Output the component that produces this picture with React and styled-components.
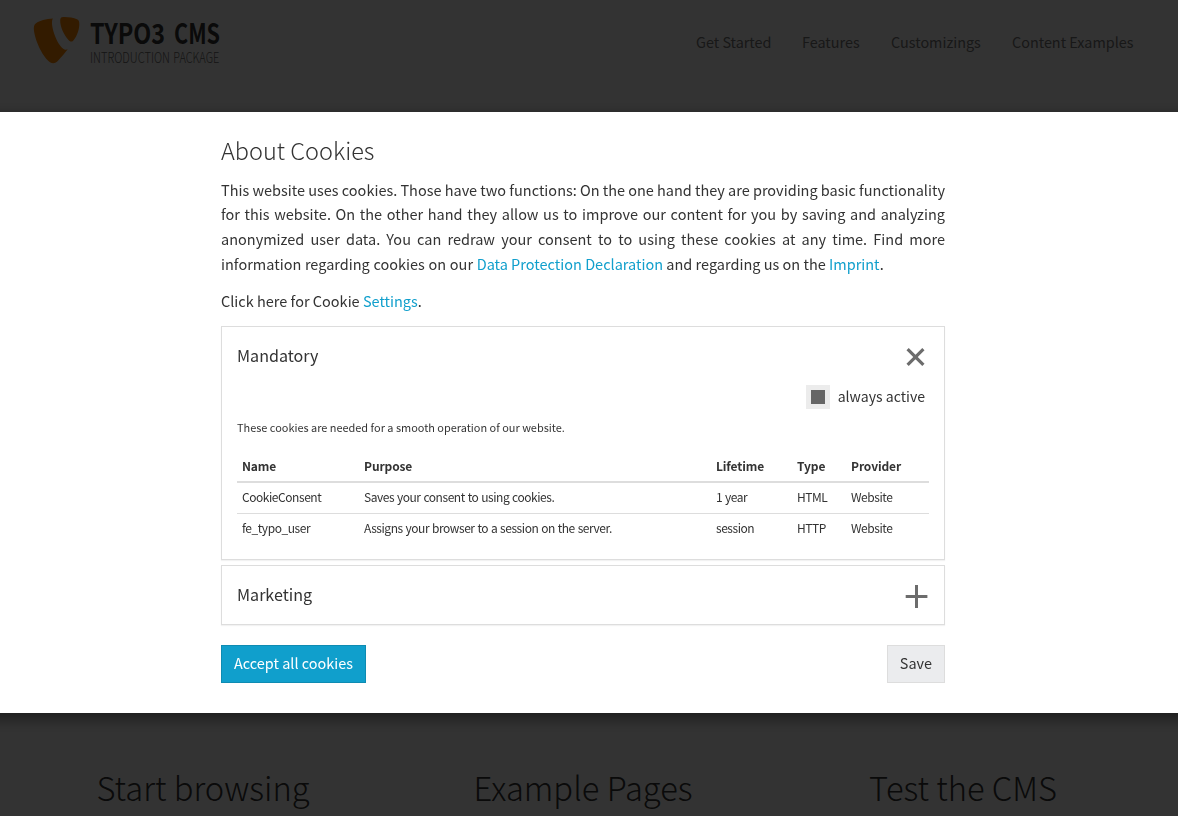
import React, { useState } from "react";
import styled, { createGlobalStyle } from "styled-components";

const GlobalStyle = createGlobalStyle`
  *, *::before, *::after { box-sizing: border-box; }
  html, body { margin: 0; height: 816px; overflow: hidden; }
  body {
    background: #fff;
    color: #333;
    font-family: "Noto Sans CJK SC", "Open Sans", sans-serif;
    font-size: 14.5px;
    line-height: 24.75px;
    font-kerning: normal;
  }
  h1, h2, h3, p { margin: 0; font-weight: 400; }
`;

const Page = styled.div`
  width: 1166px;
  height: 816px;
  display: flex;
  flex-direction: column;
  justify-content: space-between;
`;

const Header = styled.header`
  display: flex;
  justify-content: space-between;
  padding: 12px 33px 0 29px;
`;

const LogoImage = styled.svg`
  width: 194px;
  height: 56px;
  overflow: visible;
`;

const Nav = styled.nav`
  display: flex;
  gap: 30px;
  padding-top: 18px;
`;

const NavLink = styled.a`
  width: ${(p) => p.$width}px;
  color: #777;
  font-size: 14.4px;
  white-space: nowrap;
`;

const Teasers = styled.section`
  display: grid;
  grid-template-columns: repeat(3, 1fr);
  width: 1140px;
  height: 53px;
  margin: 0 auto;
`;

const TeaserTitle = styled.h2`
  font-size: 32.7px;
  font-weight: 300;
  line-height: 48px;
  text-align: center;
`;

const Overlay = styled.div`
  position: fixed;
  inset: 0;
  padding-top: 112px;
  background: rgba(0, 0, 0, 0.8);
`;

const Dialog = styled.div`
  height: 601px;
  margin: 0 -30px;
  padding: 19.75px 30px 0;
  background: #fff;
  box-shadow: 0 5px 15px rgba(0, 0, 0, 0.5);
`;

const DialogContent = styled.div`
  width: 724px;
  margin-left: 221px;
`;

const Title = styled.h1`
  margin-bottom: 9.95px;
  font-size: 23.5px;
  font-weight: 300;
  line-height: 36px;
`;

const Paragraph = styled.p`
  margin-bottom: 12.15px;
`;

const JustifiedLine = styled.span`
  display: block;
  text-align: justify;
  text-align-last: justify;
  word-spacing: -1.5px;
  white-space: normal;
`;

const LeadPhrase = styled.span`
  word-spacing: 0.4px;
`;

const Link = styled.a`
  color: #109fcc;
`;

const Card = styled.section`
  margin-bottom: 5px;
  padding: 0 15px;
  border: 1px solid #ddd;
  box-shadow: 0 1px 1px rgba(0, 0, 0, 0.05);
`;

const CardHeader = styled.div`
  display: flex;
  align-items: center;
  justify-content: space-between;
  height: 58px;
  cursor: pointer;
`;

const CardTitle = styled.h3`
  padding-bottom: 2px;
  font-size: 16.1px;
  line-height: 28px;
`;

const ToggleIcon = styled.svg`
  width: 24px;
  height: 24px;
  overflow: visible;
`;

const CheckRow = styled.div`
  display: flex;
  justify-content: flex-end;
  gap: 8px;
  padding-right: 4px;
  height: 24px;
  font-size: 14.1px;
  line-height: 22px;
`;

const CheckBox = styled.span`
  width: 24px;
  height: 24px;
  border: 5px solid #ececec;
  background: #666;
`;

const Hint = styled.p`
  margin: 10px 0 15px;
  font-size: 10.93px;
  line-height: 17px;
`;

const Table = styled.table`
  width: 692px;
  margin-bottom: 15px;
  border-collapse: separate;
  border-spacing: 0;
  table-layout: fixed;
  font-size: 12px;
  line-height: 20px;
  text-align: left;
`;

const HeadCell = styled.th`
  width: ${(p) => p.$width}px;
  height: 32px;
  padding: 1px 5px 0;
  border-bottom: 2px solid #ddd;
  letter-spacing: -0.12px;
  font-weight: 700;
`;

const Cell = styled.td`
  height: ${(p) => (p.$last ? 30 : 31)}px;
  padding: 0 5px 1px;
  border-bottom: ${(p) => (p.$last ? "0" : "1px solid #ddd")};
  letter-spacing: -0.45px;
  word-spacing: 0.6px;
  white-space: nowrap;
`;

const Actions = styled.div`
  display: flex;
  justify-content: space-between;
  padding-top: 15px;
`;

const Button = styled.button`
  height: 38px;
  padding: 0 12px;
  border: 1px solid ${(p) => (p.$primary ? "#0e8bb2" : "#ddd")};
  background: ${(p) => (p.$primary ? "#109fcc" : "#ebecee")};
  color: ${(p) => (p.$primary ? "#fff" : "#333")};
  font: inherit;
  font-size: 14.45px;
  white-space: nowrap;
`;

const navigation = [
  ["Get Started", 76],
  ["Features", 59],
  ["Customizings", 91],
  ["Content Examples", 121],
];

const columns = [
  ["Name", 122],
  ["Purpose", 352],
  ["Lifetime", 81],
  ["Type", 54],
  ["Provider", 83],
];

const cookies = [
  ["CookieConsent", "Saves your consent to using cookies.", "1 year", "HTML", "Website"],
  ["fe_typo_user", "Assigns your browser to a session on the server.", "session", "HTTP", "Website"],
];

const wordmark = [
  { text: "TYPO3", x: 90, y: 43.5, width: 75, size: 28, weight: 700, fill: "#333" },
  { text: "CMS", x: 174, y: 43.5, width: 46, size: 28, weight: 700, fill: "#333" },
  { text: "INTRODUCTION", x: 90, y: 62.5, width: 80, size: 14.6, weight: 300, fill: "#666" },
  { text: "PACKAGE", x: 173.3, y: 62.5, width: 46, size: 14.6, weight: 300, fill: "#666" },
];

function Logo() {
  return (
    <LogoImage viewBox="29 12 194 56" role="img" aria-label="TYPO3 CMS">
      <g fill="#ff8700">
        <path d="M53 18.6C46 19 39.5 20.8 36 23.2C33.8 24.8 33.6 27 34 31C35.5 42 43.5 58 50 62.2C53 64 56 63 58 60.8C61.5 57 65 53 67.7 49.3C66.5 49.9 65.5 49.8 64.5 49.5C58 46.5 52 30 52 23C52 20.5 52.4 19.2 53 18.6Z" />
        <path d="M62 17.2C67 16.8 73 17.6 77 19.2C79 20.2 79.4 21.5 79.3 25C79 31 76 38.5 72.6 41.2C71.3 42 70 41.6 68.5 40C64 35.5 60 26 60.2 20.5C60.3 18.3 60.7 17.4 62 17.2Z" />
      </g>
      {wordmark.map((w) => (
        <text
          key={w.text}
          x={w.x}
          y={w.y}
          fontSize={w.size}
          fontWeight={w.weight}
          fill={w.fill}
          textLength={w.width}
          lengthAdjust="spacingAndGlyphs"
        >
          {w.text}
        </text>
      ))}
    </LogoImage>
  );
}

function Panel({ title, open, onToggle, children }) {
  return (
    <Card>
      <CardHeader onClick={onToggle}>
        <CardTitle>{title}</CardTitle>
        <ToggleIcon viewBox="0 0 24 24" aria-hidden="true">
          {open ? (
            <path d="M2.6 5.1 18.4 20.9M18.4 5.1 2.6 20.9" stroke="#6c6c6c" strokeWidth="3.2" />
          ) : (
            <path d="M.7 13.5H22.4M11.5 2V25" stroke="#6c6c6c" strokeWidth="3" />
          )}
        </ToggleIcon>
      </CardHeader>
      {open && children}
    </Card>
  );
}

export default function App() {
  const [open, setOpen] = useState({ mandatory: true, marketing: false });
  const toggle = (key) => () => setOpen((s) => ({ ...s, [key]: !s[key] }));

  return (
    <>
      <GlobalStyle />
      <Page>
        <Header>
          <Logo />
          <Nav>
            {navigation.map(([label, width]) => (
              <NavLink key={label} $width={width}>{label}</NavLink>
            ))}
          </Nav>
        </Header>
        <Teasers>
          <TeaserTitle>Start browsing</TeaserTitle>
          <TeaserTitle>Example Pages</TeaserTitle>
          <TeaserTitle>Test the CMS</TeaserTitle>
        </Teasers>
      </Page>
      <Overlay>
        <Dialog role="dialog">
          <DialogContent>
            <Title>About Cookies</Title>
            <Paragraph>
              <JustifiedLine>
                This website uses cookies. Those have two functions: On the one hand they are providing basic functionality
              </JustifiedLine>
              <JustifiedLine>
                for this website. On the other hand they allow us to improve our content for you by saving and analyzing
              </JustifiedLine>
              <JustifiedLine>
                anonymized user data. You can redraw your consent to to using these cookies at any time. Find more
              </JustifiedLine>
              <LeadPhrase>information regarding cookies on our </LeadPhrase>
              <Link>Data Protection Declaration</Link> and regarding us on the <Link>Imprint</Link>.
            </Paragraph>
            <Paragraph>
              Click here for Cookie <Link>Settings</Link>.
            </Paragraph>
            <Panel title="Mandatory" open={open.mandatory} onToggle={toggle("mandatory")}>
              <CheckRow>
                <CheckBox />
                always active
              </CheckRow>
              <Hint>These cookies are needed for a smooth operation of our website.</Hint>
              <Table>
                <thead>
                  <tr>
                    {columns.map(([label, width]) => (
                      <HeadCell key={label} $width={width}>{label}</HeadCell>
                    ))}
                  </tr>
                </thead>
                <tbody>
                  {cookies.map((row, i) => (
                    <tr key={row[0]}>
                      {row.map((value, j) => (
                        <Cell key={j} $last={i === cookies.length - 1}>{value}</Cell>
                      ))}
                    </tr>
                  ))}
                </tbody>
              </Table>
            </Panel>
            <Panel title="Marketing" open={open.marketing} onToggle={toggle("marketing")} />
            <Actions>
              <Button $primary>Accept all cookies</Button>
              <Button>Save</Button>
            </Actions>
          </DialogContent>
        </Dialog>
      </Overlay>
    </>
  );
}
